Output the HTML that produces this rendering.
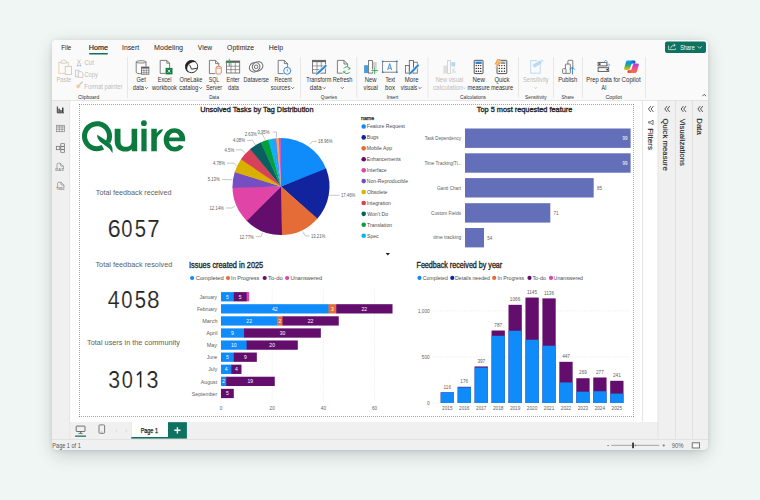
<!DOCTYPE html>
<html><head><meta charset="utf-8"><style>
html,body{margin:0;padding:0;background:#f0f6f4;}
svg{display:block;font-family:"Liberation Sans",sans-serif;}
</style></head><body>
<svg width="760" height="500" viewBox="0 0 760 500">
<defs><filter id="sh" x="-10%" y="-20%" width="120%" height="140%"><feGaussianBlur stdDeviation="9"/></filter>
<filter id="sh2" x="-10%" y="-10%" width="120%" height="120%"><feGaussianBlur stdDeviation="2"/></filter></defs>
<rect x="53" y="45" width="654" height="410" rx="6" fill="#233536" opacity="0.22" filter="url(#sh)"/>
<rect x="52" y="40.5" width="656" height="410" rx="5" fill="#233536" opacity="0.12" filter="url(#sh2)"/>

<path d="M55.5 40 H704.5 a3.5 3.5 0 0 1 3.5 3.5 V445 a5 5 0 0 1 -5 5 H57 a5 5 0 0 1 -5 -5 V43.5 a3.5 3.5 0 0 1 3.5 -3.5 Z" fill="#fafafa"/>
<rect x="52" y="100" width="18" height="340" fill="#f0f0f0"/>
<rect x="70" y="100" width="588" height="322" fill="#ffffff"/>
<rect x="658" y="100" width="50" height="340" fill="#f0f0f0"/>
<rect x="70" y="422" width="588" height="17" fill="#f0f0f0"/>
<path d="M52 439 H708 V445 a5 5 0 0 1 -5 5 H57 a5 5 0 0 1 -5 -5 Z" fill="#f0f0f0"/>
<rect x="52" y="100" width="656" height="0.8" fill="#e1dfdd"/>
<rect x="52" y="439" width="656" height="0.8" fill="#e1dfdd"/>
<rect x="69.5" y="100" width="0.7" height="339" fill="#e1dfdd"/>
<rect x="642" y="100" width="0.8" height="322" fill="#e1dfdd"/>
<rect x="657.6" y="100" width="0.8" height="339" fill="#e1dfdd"/>
<rect x="675.2" y="100" width="0.8" height="339" fill="#e1dfdd"/>
<rect x="692.2" y="100" width="0.8" height="339" fill="#e1dfdd"/>
<line x1="79" y1="104.5" x2="634" y2="104.5" stroke="#6e6c6a" stroke-width="0.6" stroke-dasharray="1 1"/><line x1="79" y1="416.5" x2="634" y2="416.5" stroke="#6e6c6a" stroke-width="0.6" stroke-dasharray="1 1"/><line x1="79.5" y1="104" x2="79.5" y2="417" stroke="#6e6c6a" stroke-width="0.6" stroke-dasharray="1 1"/><line x1="633.5" y1="104" x2="633.5" y2="417" stroke="#6e6c6a" stroke-width="0.6" stroke-dasharray="1 1"/><text x="61.20" y="49.60" font-size="6.98" textLength="10.09" lengthAdjust="spacingAndGlyphs" fill="#252423" >File</text><text x="88.83" y="49.60" font-size="6.98" textLength="19.11" lengthAdjust="spacingAndGlyphs" fill="#252423" stroke="#252423" stroke-width="0.18">Home</text><rect x="89" y="53" width="19" height="1.4" rx="0.7" fill="#0f715f"/><text x="122.09" y="49.60" font-size="6.98" textLength="16.95" lengthAdjust="spacingAndGlyphs" fill="#252423" >Insert</text><text x="154.13" y="49.60" font-size="6.98" textLength="28.96" lengthAdjust="spacingAndGlyphs" fill="#252423" >Modeling</text><text x="197.87" y="49.60" font-size="6.98" textLength="14.33" lengthAdjust="spacingAndGlyphs" fill="#252423" >View</text><text x="227.09" y="49.60" font-size="6.98" textLength="27.02" lengthAdjust="spacingAndGlyphs" fill="#252423" >Optimize</text><text x="268.84" y="49.60" font-size="6.98" textLength="14.35" lengthAdjust="spacingAndGlyphs" fill="#252423" >Help</text><rect x="665" y="41.4" width="41" height="11.5" rx="2" fill="#0f715f"/><text x="680.26" y="49.80" font-size="6.98" textLength="14.41" lengthAdjust="spacingAndGlyphs" fill="#ffffff" >Share</text><path d="M697.6 46.2 l2.1 2.1 l2.1 -2.1" stroke="#fff" stroke-width="0.7" fill="none"/><path d="M668.6 45.6 V49.6 H675.4 V48.2 M670.6 48.4 C670.9 46.4 672.4 45.2 675 45.2 M673.6 43.9 L675.3 45.2 L673.6 46.5" stroke="#fff" stroke-width="0.65" fill="none"/><text x="95.86" y="195.30" font-size="7.56" textLength="75.62" lengthAdjust="spacingAndGlyphs" fill="#605e5c" >Total feedback received</text><text x="107.84" y="237.30" font-size="23.78" textLength="12.92" lengthAdjust="spacingAndGlyphs" fill="#252423" stroke="#ffffff" stroke-width="0.15">6</text><text x="121.29" y="237.30" font-size="23.78" textLength="11.24" lengthAdjust="spacingAndGlyphs" fill="#252423" stroke="#ffffff" stroke-width="0.15">0</text><text x="134.69" y="237.30" font-size="23.78" textLength="11.24" lengthAdjust="spacingAndGlyphs" fill="#252423" stroke="#ffffff" stroke-width="0.15">5</text><text x="147.29" y="237.30" font-size="23.78" textLength="12.35" lengthAdjust="spacingAndGlyphs" fill="#252423" stroke="#ffffff" stroke-width="0.15">7</text><text x="95.45" y="267.00" font-size="7.56" textLength="76.93" lengthAdjust="spacingAndGlyphs" fill="#605e5c" >Total feedback resolved</text><text x="107.67" y="308.00" font-size="23.78" textLength="11.89" lengthAdjust="spacingAndGlyphs" fill="#252423" stroke="#ffffff" stroke-width="0.15">4</text><text x="121.29" y="308.00" font-size="23.78" textLength="11.24" lengthAdjust="spacingAndGlyphs" fill="#252423" stroke="#ffffff" stroke-width="0.15">0</text><text x="134.69" y="308.00" font-size="23.78" textLength="11.24" lengthAdjust="spacingAndGlyphs" fill="#252423" stroke="#ffffff" stroke-width="0.15">5</text><text x="146.89" y="308.00" font-size="23.78" textLength="12.54" lengthAdjust="spacingAndGlyphs" fill="#252423" stroke="#ffffff" stroke-width="0.15">8</text><text x="87.05" y="344.80" font-size="7.70" textLength="92.86" lengthAdjust="spacingAndGlyphs" fill="#605e5c" >Total users in the community</text><text x="108.35" y="387.60" font-size="23.78" textLength="11.83" lengthAdjust="spacingAndGlyphs" fill="#252423" stroke="#ffffff" stroke-width="0.15">3</text><text x="121.80" y="387.60" font-size="23.78" textLength="11.12" lengthAdjust="spacingAndGlyphs" fill="#252423" stroke="#ffffff" stroke-width="0.15">0</text><text x="146.54" y="387.60" font-size="23.78" textLength="11.94" lengthAdjust="spacingAndGlyphs" fill="#252423" stroke="#ffffff" stroke-width="0.15">3</text><path d="M140.6 371.2 V387.6 M140.9 371.6 L137 375.2" stroke="#252423" stroke-width="1.6" fill="none"/><text x="200.25" y="111.70" font-size="7.85" textLength="113.23" lengthAdjust="spacingAndGlyphs" fill="#252423" stroke="#252423" stroke-width="0.34">Unsolved Tasks by Tag Distribution</text><text x="476.75" y="111.80" font-size="7.70" textLength="95.60" lengthAdjust="spacingAndGlyphs" fill="#252423" stroke="#252423" stroke-width="0.34">Top 5 most requested feature</text><text x="189.04" y="268.00" font-size="8.58" textLength="74.17" lengthAdjust="spacingAndGlyphs" fill="#252423" stroke="#252423" stroke-width="0.34">Issues created in 2025</text><text x="416.53" y="268.00" font-size="8.58" textLength="85.69" lengthAdjust="spacingAndGlyphs" fill="#252423" stroke="#252423" stroke-width="0.34">Feedback received by year</text><g fill="#0a7a3e">
<path d="M104.07 149.49 A15.05 15.05 0 1 1 110.29 143.27 L105.83 140.89 A10 10 0 1 0 101.69 145.03 Z"/>
<path d="M97.1 134.8 C101 137.5 107 140.5 110 143.5 C112.5 146 113 150 112.4 153.3 C111 150 108.5 147.5 104.5 145 C100 142 97.2 139.5 97.1 134.8 Z"/>
<path d="M114.7 128.7 H120.5 V141.5 C120.5 145 122.5 146.8 126 146.8 C129.5 146.8 131.6 145 131.6 141.5 V128.7 H137.2 V151.3 H131.8 V149.2 C130 150.8 128 151.6 125.5 151.6 C119 151.6 114.7 147.5 114.7 141 Z"/>
<rect x="141.4" y="128.7" width="5.2" height="22.6"/>
<circle cx="143.9" cy="123.2" r="2.9"/>
<path d="M151.3 128.7 H156.8 V133.2 C158.3 130.6 160.2 129.3 163 129.0 C162.3 131.8 160.5 133.6 158.6 135.2 C157.6 136.2 157 137.5 156.8 139.2 V151.3 H151.3 Z"/>
<path d="M185 141.3 C185.2 140.5 185.2 139.5 185.2 139 C185.2 132.5 180.5 128.2 174.4 128.2 C168.2 128.2 163.7 133 163.7 139.8 C163.7 146.6 168.5 151.6 174.8 151.6 C178.5 151.6 181.8 149.8 183.7 146.5 L179.2 144.8 C178 146.2 176.5 147 174.8 147 C171.5 147 169.4 144.5 169 141.3 Z M169.2 137.6 C169.8 134.6 171.8 132.8 174.4 132.8 C177 132.8 179 134.6 179.6 137.6 Z"/>
</g><path d="M281.0 186.5 L281.00 138.00 A48.5 48.5 0 0 1 326.31 169.20 Z" fill="#0f8bfa"/><path d="M281.0 186.5 L326.06 168.56 A48.5 48.5 0 0 1 317.05 218.95 Z" fill="#12239E"/><path d="M281.0 186.5 L317.50 218.44 A48.5 48.5 0 0 1 281.36 235.00 Z" fill="#E66C37"/><path d="M281.0 186.5 L282.04 234.99 A48.5 48.5 0 0 1 246.36 220.45 Z" fill="#630e6d"/><path d="M281.0 186.5 L246.84 220.93 A48.5 48.5 0 0 1 232.50 187.09 Z" fill="#E044A7"/><path d="M281.0 186.5 L232.52 187.77 A48.5 48.5 0 0 1 234.82 171.69 Z" fill="#744EC2"/><path d="M281.0 186.5 L234.62 172.33 A48.5 48.5 0 0 1 241.27 158.68 Z" fill="#D9B000"/><path d="M281.0 186.5 L240.89 159.24 A48.5 48.5 0 0 1 250.62 148.70 Z" fill="#D9405A"/><path d="M281.0 186.5 L250.09 149.12 A48.5 48.5 0 0 1 261.20 142.22 Z" fill="#0a5f61"/><path d="M281.0 186.5 L260.59 142.51 A48.5 48.5 0 0 1 268.76 139.57 Z" fill="#089e3e"/><path d="M281.0 186.5 L268.11 139.75 A48.5 48.5 0 0 1 273.20 138.63 Z" fill="#08b6ef"/><path d="M281.0 186.5 L272.54 138.74 A48.5 48.5 0 0 1 276.71 138.19 Z" fill="#4092FF"/><path d="M281.0 186.5 L276.04 138.25 A48.5 48.5 0 0 1 279.45 138.02 Z" fill="#FFA058"/><path d="M281.0 186.5 L278.77 138.05 A48.5 48.5 0 0 1 281.00 138.00 Z" fill="#BE5DC9"/><text x="318.08" y="143.10" font-size="5.60" textLength="14.43" lengthAdjust="spacingAndGlyphs" fill="#605e5c" >18.96%</text><polyline points="309.5,144.5 312.5,141.3 317,141.3" fill="none" stroke="#a19f9d" stroke-width="0.6"/><text x="340.88" y="197.10" font-size="5.60" textLength="14.43" lengthAdjust="spacingAndGlyphs" fill="#605e5c" >17.46%</text><polyline points="329.5,195.3 339.5,195.3" fill="none" stroke="#a19f9d" stroke-width="0.6"/><text x="310.88" y="237.70" font-size="5.60" textLength="14.43" lengthAdjust="spacingAndGlyphs" fill="#605e5c" >13.21%</text><polyline points="302.5,231.5 305.5,235.9 309.5,235.9" fill="none" stroke="#a19f9d" stroke-width="0.6"/><text x="239.38" y="238.50" font-size="5.60" textLength="14.43" lengthAdjust="spacingAndGlyphs" fill="#605e5c" >12.77%</text><polyline points="255.5,236.7 261,236.7 262.5,233" fill="none" stroke="#a19f9d" stroke-width="0.6"/><text x="209.38" y="209.80" font-size="5.60" textLength="14.43" lengthAdjust="spacingAndGlyphs" fill="#605e5c" >12.14%</text><polyline points="226,208 232,208 235,206" fill="none" stroke="#a19f9d" stroke-width="0.6"/><text x="207.63" y="181.10" font-size="5.60" textLength="12.07" lengthAdjust="spacingAndGlyphs" fill="#605e5c" >5.13%</text><polyline points="222,179.3 232.5,179.8" fill="none" stroke="#a19f9d" stroke-width="0.6"/><text x="212.91" y="165.00" font-size="5.60" textLength="12.07" lengthAdjust="spacingAndGlyphs" fill="#605e5c" >4.78%</text><polyline points="227,163.2 234,163.2 236.5,166" fill="none" stroke="#a19f9d" stroke-width="0.6"/><text x="224.51" y="151.60" font-size="5.60" textLength="9.70" lengthAdjust="spacingAndGlyphs" fill="#605e5c" >4.5%</text><polyline points="236,149.8 242,149.8 244.5,153" fill="none" stroke="#a19f9d" stroke-width="0.6"/><text x="232.91" y="142.20" font-size="5.60" textLength="12.07" lengthAdjust="spacingAndGlyphs" fill="#605e5c" >4.08%</text><polyline points="247,140.4 252.5,140.4 255.5,145" fill="none" stroke="#a19f9d" stroke-width="0.6"/><text x="244.79" y="136.20" font-size="5.60" textLength="12.07" lengthAdjust="spacingAndGlyphs" fill="#605e5c" >2.63%</text><polyline points="259.4,133.8 262,134 265.4,139.8" fill="none" stroke="#a19f9d" stroke-width="0.6"/><text x="257.43" y="133.80" font-size="5.60" textLength="12.07" lengthAdjust="spacingAndGlyphs" fill="#605e5c" >0.95%</text><polyline points="272.6,132 276.5,132 276.5,137.4" fill="none" stroke="#a19f9d" stroke-width="0.6"/><text x="360.96" y="120.30" font-size="6.00" textLength="13.19" lengthAdjust="spacingAndGlyphs" fill="#252423" stroke="#252423" stroke-width="0.25">name</text><circle cx="363.7" cy="126.50" r="2.3" fill="#0f8bfa"/><text x="366.79" y="128.40" font-size="5.50" textLength="38.10" lengthAdjust="spacingAndGlyphs" fill="#4f4d4b" >Feature Request</text><circle cx="363.7" cy="137.42" r="2.3" fill="#12239E"/><text x="366.79" y="139.32" font-size="5.50" textLength="11.66" lengthAdjust="spacingAndGlyphs" fill="#4f4d4b" >Bugs</text><circle cx="363.7" cy="148.34" r="2.3" fill="#E66C37"/><text x="366.79" y="150.24" font-size="5.50" textLength="25.31" lengthAdjust="spacingAndGlyphs" fill="#4f4d4b" >Mobile App</text><circle cx="363.7" cy="159.26" r="2.3" fill="#630e6d"/><text x="366.79" y="161.16" font-size="5.50" textLength="34.12" lengthAdjust="spacingAndGlyphs" fill="#4f4d4b" >Enhancements</text><circle cx="363.7" cy="170.18" r="2.3" fill="#E044A7"/><text x="366.74" y="172.08" font-size="5.50" textLength="19.90" lengthAdjust="spacingAndGlyphs" fill="#4f4d4b" >Interface</text><circle cx="363.7" cy="181.10" r="2.3" fill="#744EC2"/><text x="366.79" y="183.00" font-size="5.50" textLength="41.23" lengthAdjust="spacingAndGlyphs" fill="#4f4d4b" >Non-Reproducible</text><circle cx="363.7" cy="192.02" r="2.3" fill="#D9B300"/><text x="366.97" y="193.92" font-size="5.50" textLength="20.47" lengthAdjust="spacingAndGlyphs" fill="#4f4d4b" >Obsolete</text><circle cx="363.7" cy="202.94" r="2.3" fill="#D9405A"/><text x="366.74" y="204.84" font-size="5.50" textLength="24.17" lengthAdjust="spacingAndGlyphs" fill="#4f4d4b" >Integration</text><circle cx="363.7" cy="213.86" r="2.3" fill="#0a5f61"/><text x="367.17" y="215.76" font-size="5.50" textLength="20.94" lengthAdjust="spacingAndGlyphs" fill="#4f4d4b" >Won’t Do</text><circle cx="363.7" cy="224.78" r="2.3" fill="#089e3e"/><text x="367.10" y="226.68" font-size="5.50" textLength="25.11" lengthAdjust="spacingAndGlyphs" fill="#4f4d4b" >Translation</text><circle cx="363.7" cy="235.70" r="2.3" fill="#08b6ef"/><text x="366.97" y="237.60" font-size="5.50" textLength="11.66" lengthAdjust="spacingAndGlyphs" fill="#4f4d4b" >Spec</text><path d="M385.6 253 h4.4 l-2.2 2.4 z" fill="#252423"/><rect x="465" y="128.50" width="165.60" height="19.4" fill="#6370b9"/><text x="424.71" y="139.95" font-size="5.00" textLength="36.29" lengthAdjust="spacingAndGlyphs" fill="#605e5c" >Task Dependency</text><text x="622.41" y="140.05" font-size="5.00" textLength="5.01" lengthAdjust="spacingAndGlyphs" fill="#ffffff" >99</text><rect x="465" y="153.30" width="165.60" height="19.4" fill="#6370b9"/><text x="424.41" y="164.75" font-size="5.00" textLength="37.02" lengthAdjust="spacingAndGlyphs" fill="#605e5c" >Time Tracking/Ti...</text><text x="622.41" y="164.85" font-size="5.00" textLength="5.01" lengthAdjust="spacingAndGlyphs" fill="#ffffff" >99</text><rect x="465" y="178.10" width="128.70" height="19.4" fill="#6370b9"/><text x="436.97" y="189.55" font-size="5.00" textLength="24.07" lengthAdjust="spacingAndGlyphs" fill="#605e5c" >Gantt Chart</text><text x="597.00" y="189.65" font-size="5.00" textLength="5.01" lengthAdjust="spacingAndGlyphs" fill="#605e5c" >85</text><rect x="465" y="203.20" width="85.30" height="19.4" fill="#6370b9"/><text x="431.06" y="214.65" font-size="5.00" textLength="30.10" lengthAdjust="spacingAndGlyphs" fill="#605e5c" >Custom Fields</text><text x="553.57" y="214.75" font-size="5.00" textLength="5.01" lengthAdjust="spacingAndGlyphs" fill="#605e5c" >71</text><rect x="465" y="228.00" width="19.00" height="19.4" fill="#6370b9"/><text x="433.33" y="239.45" font-size="5.00" textLength="28.01" lengthAdjust="spacingAndGlyphs" fill="#605e5c" >time tracking</text><text x="487.32" y="239.55" font-size="5.00" textLength="5.01" lengthAdjust="spacingAndGlyphs" fill="#605e5c" >54</text><circle cx="192.1" cy="278.0" r="2.1" fill="#0f8bfa"/><text x="195.71" y="280.10" font-size="6.00" textLength="28.07" lengthAdjust="spacingAndGlyphs" fill="#4f4d4b" >Completed</text><circle cx="228.0" cy="278.0" r="2.1" fill="#E66C37"/><text x="231.10" y="280.10" font-size="6.00" textLength="28.28" lengthAdjust="spacingAndGlyphs" fill="#4f4d4b" >In Progress</text><circle cx="264.7" cy="278.0" r="2.1" fill="#630e6d"/><text x="268.08" y="280.10" font-size="6.00" textLength="14.76" lengthAdjust="spacingAndGlyphs" fill="#4f4d4b" >To-do</text><circle cx="287.1" cy="278.0" r="2.1" fill="#E044A7"/><text x="290.38" y="280.10" font-size="6.00" textLength="31.79" lengthAdjust="spacingAndGlyphs" fill="#4f4d4b" >Unanswered</text><line x1="221.0" y1="289" x2="221.0" y2="402" stroke="#d6d4d2" stroke-width="0.6" stroke-dasharray="0.8 1.6"/><text x="219.69" y="410.10" font-size="5.20" textLength="2.60" lengthAdjust="spacingAndGlyphs" fill="#605e5c" >0</text><line x1="272.2" y1="289" x2="272.2" y2="402" stroke="#d6d4d2" stroke-width="0.6" stroke-dasharray="0.8 1.6"/><text x="269.57" y="410.10" font-size="5.20" textLength="5.21" lengthAdjust="spacingAndGlyphs" fill="#605e5c" >20</text><line x1="323.4" y1="289" x2="323.4" y2="402" stroke="#d6d4d2" stroke-width="0.6" stroke-dasharray="0.8 1.6"/><text x="320.84" y="410.10" font-size="5.20" textLength="5.21" lengthAdjust="spacingAndGlyphs" fill="#605e5c" >40</text><line x1="374.6" y1="289" x2="374.6" y2="402" stroke="#d6d4d2" stroke-width="0.6" stroke-dasharray="0.8 1.6"/><text x="371.97" y="410.10" font-size="5.20" textLength="5.21" lengthAdjust="spacingAndGlyphs" fill="#605e5c" >60</text><text x="199.43" y="298.95" font-size="6.00" textLength="17.66" lengthAdjust="spacingAndGlyphs" fill="#605e5c" >January</text><rect x="221.00" y="292.10" width="13.20" height="9.3" fill="#0f8bfa"/><text x="226.00" y="298.75" font-size="5.60" textLength="2.80" lengthAdjust="spacingAndGlyphs" fill="#ffffff" >5</text><rect x="233.80" y="292.10" width="13.20" height="9.3" fill="#630e6d"/><text x="238.80" y="298.75" font-size="5.60" textLength="2.80" lengthAdjust="spacingAndGlyphs" fill="#ffffff" >5</text><rect x="246.60" y="292.10" width="2.56" height="9.3" fill="#E044A7"/><text x="196.90" y="311.04" font-size="6.00" textLength="20.21" lengthAdjust="spacingAndGlyphs" fill="#605e5c" >February</text><rect x="221.00" y="304.19" width="107.92" height="9.3" fill="#0f8bfa"/><text x="272.04" y="310.84" font-size="5.60" textLength="5.61" lengthAdjust="spacingAndGlyphs" fill="#ffffff" >42</text><rect x="328.52" y="304.19" width="8.08" height="9.3" fill="#E66C37"/><text x="330.96" y="310.84" font-size="5.60" textLength="2.80" lengthAdjust="spacingAndGlyphs" fill="#ffffff" >3</text><rect x="336.20" y="304.19" width="56.32" height="9.3" fill="#630e6d"/><text x="361.56" y="310.84" font-size="5.60" textLength="5.61" lengthAdjust="spacingAndGlyphs" fill="#ffffff" >22</text><text x="202.26" y="323.13" font-size="6.00" textLength="15.21" lengthAdjust="spacingAndGlyphs" fill="#605e5c" >March</text><rect x="221.00" y="316.28" width="56.72" height="9.3" fill="#0f8bfa"/><text x="246.36" y="322.93" font-size="5.60" textLength="5.61" lengthAdjust="spacingAndGlyphs" fill="#ffffff" >22</text><rect x="277.32" y="316.28" width="5.52" height="9.3" fill="#E66C37"/><text x="278.48" y="322.93" font-size="5.60" textLength="2.80" lengthAdjust="spacingAndGlyphs" fill="#ffffff" >2</text><rect x="282.44" y="316.28" width="56.32" height="9.3" fill="#630e6d"/><text x="307.80" y="322.93" font-size="5.60" textLength="5.61" lengthAdjust="spacingAndGlyphs" fill="#ffffff" >22</text><text x="206.30" y="335.22" font-size="6.00" textLength="11.17" lengthAdjust="spacingAndGlyphs" fill="#605e5c" >April</text><rect x="221.00" y="328.37" width="23.44" height="9.3" fill="#0f8bfa"/><text x="231.12" y="335.02" font-size="5.60" textLength="2.80" lengthAdjust="spacingAndGlyphs" fill="#ffffff" >9</text><rect x="244.04" y="328.37" width="76.80" height="9.3" fill="#630e6d"/><text x="279.63" y="335.02" font-size="5.60" textLength="5.61" lengthAdjust="spacingAndGlyphs" fill="#ffffff" >30</text><text x="206.66" y="347.31" font-size="6.00" textLength="10.44" lengthAdjust="spacingAndGlyphs" fill="#605e5c" >May</text><rect x="221.00" y="340.46" width="26.00" height="9.3" fill="#0f8bfa"/><text x="230.90" y="347.11" font-size="5.60" textLength="5.61" lengthAdjust="spacingAndGlyphs" fill="#ffffff" >10</text><rect x="246.60" y="340.46" width="51.20" height="9.3" fill="#630e6d"/><text x="269.36" y="347.11" font-size="5.60" textLength="5.61" lengthAdjust="spacingAndGlyphs" fill="#ffffff" >20</text><text x="206.73" y="359.40" font-size="6.00" textLength="10.61" lengthAdjust="spacingAndGlyphs" fill="#605e5c" >June</text><rect x="221.00" y="352.55" width="13.20" height="9.3" fill="#0f8bfa"/><text x="226.00" y="359.20" font-size="5.60" textLength="2.80" lengthAdjust="spacingAndGlyphs" fill="#ffffff" >5</text><rect x="233.80" y="352.55" width="23.04" height="9.3" fill="#630e6d"/><text x="243.92" y="359.20" font-size="5.60" textLength="2.80" lengthAdjust="spacingAndGlyphs" fill="#ffffff" >9</text><text x="208.33" y="371.49" font-size="6.00" textLength="8.77" lengthAdjust="spacingAndGlyphs" fill="#605e5c" >July</text><rect x="221.00" y="364.64" width="10.64" height="9.3" fill="#0f8bfa"/><text x="224.75" y="371.29" font-size="5.60" textLength="2.80" lengthAdjust="spacingAndGlyphs" fill="#ffffff" >4</text><rect x="231.24" y="364.64" width="10.24" height="9.3" fill="#630e6d"/><text x="234.99" y="371.29" font-size="5.60" textLength="2.80" lengthAdjust="spacingAndGlyphs" fill="#ffffff" >4</text><text x="200.80" y="383.58" font-size="6.00" textLength="16.34" lengthAdjust="spacingAndGlyphs" fill="#605e5c" >August</text><rect x="221.00" y="376.73" width="5.52" height="9.3" fill="#0f8bfa"/><text x="222.16" y="383.38" font-size="5.60" textLength="2.80" lengthAdjust="spacingAndGlyphs" fill="#ffffff" >2</text><rect x="226.12" y="376.73" width="48.64" height="9.3" fill="#630e6d"/><text x="247.57" y="383.38" font-size="5.60" textLength="5.61" lengthAdjust="spacingAndGlyphs" fill="#ffffff" >19</text><text x="191.87" y="395.67" font-size="6.00" textLength="25.32" lengthAdjust="spacingAndGlyphs" fill="#605e5c" >September</text><rect x="221.00" y="388.82" width="12.80" height="9.3" fill="#630e6d"/><text x="226.00" y="395.47" font-size="5.60" textLength="2.80" lengthAdjust="spacingAndGlyphs" fill="#ffffff" >5</text><circle cx="419.5" cy="277.9" r="2.1" fill="#0f8bfa"/><text x="422.74" y="280.10" font-size="6.00" textLength="25.10" lengthAdjust="spacingAndGlyphs" fill="#4f4d4b" >Completed</text><circle cx="452.3" cy="277.9" r="2.1" fill="#12239E"/><text x="455.08" y="280.10" font-size="6.00" textLength="34.76" lengthAdjust="spacingAndGlyphs" fill="#4f4d4b" >Details needed</text><circle cx="494.2" cy="277.9" r="2.1" fill="#E66C37"/><text x="497.53" y="280.10" font-size="6.00" textLength="26.64" lengthAdjust="spacingAndGlyphs" fill="#4f4d4b" >In Progress</text><circle cx="529.5" cy="277.9" r="2.1" fill="#630e6d"/><text x="532.39" y="280.10" font-size="6.00" textLength="13.64" lengthAdjust="spacingAndGlyphs" fill="#4f4d4b" >To-do</text><circle cx="551.0" cy="277.9" r="2.1" fill="#E044A7"/><text x="553.61" y="280.10" font-size="6.00" textLength="29.43" lengthAdjust="spacingAndGlyphs" fill="#4f4d4b" >Unanswered</text><line x1="433" y1="310.90" x2="630" y2="310.90" stroke="#d6d4d2" stroke-width="0.6" stroke-dasharray="0.8 1.6"/><text x="417.96" y="312.80" font-size="5.20" textLength="11.71" lengthAdjust="spacingAndGlyphs" fill="#605e5c" >1,000</text><line x1="433" y1="356.95" x2="630" y2="356.95" stroke="#d6d4d2" stroke-width="0.6" stroke-dasharray="0.8 1.6"/><text x="421.87" y="358.85" font-size="5.20" textLength="7.81" lengthAdjust="spacingAndGlyphs" fill="#605e5c" >500</text><line x1="433" y1="403.00" x2="440" y2="403.00" stroke="#d6d4d2" stroke-width="0.6" stroke-dasharray="0.8 1.6"/><text x="427.07" y="404.90" font-size="5.20" textLength="2.60" lengthAdjust="spacingAndGlyphs" fill="#605e5c" >0</text><rect x="440.70" y="392.32" width="13.3" height="10.68" fill="#630e6d"/><rect x="440.70" y="392.32" width="13.3" height="10.68" fill="#0f8bfa"/><text x="443.54" y="388.52" font-size="5.20" textLength="7.46" lengthAdjust="spacingAndGlyphs" fill="#605e5c" >116</text><text x="442.12" y="410.20" font-size="5.20" textLength="10.41" lengthAdjust="spacingAndGlyphs" fill="#605e5c" >2015</text><rect x="457.65" y="386.79" width="13.3" height="16.21" fill="#630e6d"/><rect x="457.65" y="387.34" width="13.3" height="15.66" fill="#0f8bfa"/><text x="460.32" y="382.99" font-size="5.20" textLength="7.81" lengthAdjust="spacingAndGlyphs" fill="#605e5c" >176</text><text x="459.07" y="410.20" font-size="5.20" textLength="10.41" lengthAdjust="spacingAndGlyphs" fill="#605e5c" >2016</text><rect x="474.60" y="366.44" width="13.3" height="36.56" fill="#630e6d"/><rect x="474.60" y="367.54" width="13.3" height="35.46" fill="#0f8bfa"/><text x="477.38" y="362.64" font-size="5.20" textLength="7.81" lengthAdjust="spacingAndGlyphs" fill="#605e5c" >397</text><text x="476.04" y="410.20" font-size="5.20" textLength="10.41" lengthAdjust="spacingAndGlyphs" fill="#605e5c" >2017</text><rect x="491.55" y="330.52" width="13.3" height="72.48" fill="#630e6d"/><rect x="491.55" y="335.77" width="13.3" height="67.23" fill="#0f8bfa"/><text x="494.30" y="326.72" font-size="5.20" textLength="7.81" lengthAdjust="spacingAndGlyphs" fill="#605e5c" >787</text><text x="492.97" y="410.20" font-size="5.20" textLength="10.41" lengthAdjust="spacingAndGlyphs" fill="#605e5c" >2018</text><rect x="508.50" y="304.82" width="13.3" height="98.18" fill="#630e6d"/><rect x="508.50" y="330.79" width="13.3" height="72.21" fill="#0f8bfa"/><text x="509.86" y="301.02" font-size="5.20" textLength="10.41" lengthAdjust="spacingAndGlyphs" fill="#605e5c" >1066</text><text x="509.93" y="410.20" font-size="5.20" textLength="10.41" lengthAdjust="spacingAndGlyphs" fill="#605e5c" >2019</text><rect x="525.45" y="297.55" width="13.3" height="105.45" fill="#630e6d"/><rect x="525.45" y="339.73" width="13.3" height="63.27" fill="#0f8bfa"/><text x="526.99" y="293.75" font-size="5.20" textLength="10.06" lengthAdjust="spacingAndGlyphs" fill="#605e5c" >1145</text><text x="526.86" y="410.20" font-size="5.20" textLength="10.41" lengthAdjust="spacingAndGlyphs" fill="#605e5c" >2020</text><rect x="542.40" y="298.37" width="13.3" height="104.63" fill="#630e6d"/><rect x="542.40" y="345.71" width="13.3" height="57.29" fill="#0f8bfa"/><text x="543.94" y="294.57" font-size="5.20" textLength="10.06" lengthAdjust="spacingAndGlyphs" fill="#605e5c" >1136</text><text x="543.83" y="410.20" font-size="5.20" textLength="10.41" lengthAdjust="spacingAndGlyphs" fill="#605e5c" >2021</text><rect x="559.35" y="361.83" width="13.3" height="41.17" fill="#630e6d"/><rect x="559.35" y="382.46" width="13.3" height="20.54" fill="#0f8bfa"/><text x="562.17" y="358.03" font-size="5.20" textLength="7.81" lengthAdjust="spacingAndGlyphs" fill="#605e5c" >447</text><text x="560.79" y="410.20" font-size="5.20" textLength="10.41" lengthAdjust="spacingAndGlyphs" fill="#605e5c" >2022</text><rect x="576.30" y="378.23" width="13.3" height="24.77" fill="#630e6d"/><rect x="576.30" y="391.67" width="13.3" height="11.33" fill="#0f8bfa"/><text x="579.04" y="374.43" font-size="5.20" textLength="7.81" lengthAdjust="spacingAndGlyphs" fill="#605e5c" >269</text><text x="577.72" y="410.20" font-size="5.20" textLength="10.41" lengthAdjust="spacingAndGlyphs" fill="#605e5c" >2023</text><rect x="593.25" y="377.49" width="13.3" height="25.51" fill="#630e6d"/><rect x="593.25" y="391.21" width="13.3" height="11.79" fill="#0f8bfa"/><text x="596.00" y="373.69" font-size="5.20" textLength="7.81" lengthAdjust="spacingAndGlyphs" fill="#605e5c" >277</text><text x="594.65" y="410.20" font-size="5.20" textLength="10.41" lengthAdjust="spacingAndGlyphs" fill="#605e5c" >2024</text><rect x="610.20" y="380.80" width="13.3" height="22.20" fill="#630e6d"/><rect x="610.20" y="393.61" width="13.3" height="9.39" fill="#0f8bfa"/><text x="612.94" y="377.00" font-size="5.20" textLength="7.81" lengthAdjust="spacingAndGlyphs" fill="#605e5c" >241</text><text x="611.62" y="410.20" font-size="5.20" textLength="10.41" lengthAdjust="spacingAndGlyphs" fill="#605e5c" >2025</text><text x="56.54" y="81.90" font-size="6.70" textLength="14.73" lengthAdjust="spacingAndGlyphs" fill="#bdbbb9" >Paste</text><text x="84.50" y="65.30" font-size="6.70" textLength="9.44" lengthAdjust="spacingAndGlyphs" fill="#bdbbb9" >Cut</text><text x="84.52" y="77.00" font-size="6.70" textLength="13.28" lengthAdjust="spacingAndGlyphs" fill="#bdbbb9" >Copy</text><text x="84.33" y="88.60" font-size="6.70" textLength="38.07" lengthAdjust="spacingAndGlyphs" fill="#bdbbb9" >Format painter</text><text x="77.95" y="98.70" font-size="5.30" textLength="21.27" lengthAdjust="spacingAndGlyphs" fill="#323130" >Clipboard</text><text x="136.61" y="81.90" font-size="6.70" textLength="9.23" lengthAdjust="spacingAndGlyphs" fill="#323130" >Get</text><text x="132.77" y="89.80" font-size="6.70" textLength="11.14" lengthAdjust="spacingAndGlyphs" fill="#323130" >data</text><path d="M145.2 87.3 L146.5 88.6 L147.8 87.3" stroke="#323130" stroke-width="0.75" fill="none"/><text x="157.85" y="81.90" font-size="6.70" textLength="13.61" lengthAdjust="spacingAndGlyphs" fill="#323130" >Excel</text><text x="152.00" y="89.80" font-size="6.70" textLength="25.00" lengthAdjust="spacingAndGlyphs" fill="#323130" >workbook</text><text x="179.55" y="81.90" font-size="6.70" textLength="22.90" lengthAdjust="spacingAndGlyphs" fill="#323130" >OneLake</text><text x="179.36" y="89.80" font-size="6.70" textLength="19.02" lengthAdjust="spacingAndGlyphs" fill="#323130" >catalog</text><path d="M199.29999999999998 87.3 L200.6 88.6 L201.9 87.3" stroke="#323130" stroke-width="0.75" fill="none"/><text x="208.77" y="81.90" font-size="6.70" textLength="10.39" lengthAdjust="spacingAndGlyphs" fill="#323130" >SQL</text><text x="206.05" y="89.80" font-size="6.70" textLength="16.06" lengthAdjust="spacingAndGlyphs" fill="#323130" >Server</text><text x="226.56" y="81.90" font-size="6.70" textLength="13.05" lengthAdjust="spacingAndGlyphs" fill="#323130" >Enter</text><text x="228.08" y="89.80" font-size="6.70" textLength="10.73" lengthAdjust="spacingAndGlyphs" fill="#323130" >data</text><text x="243.55" y="81.90" font-size="6.70" textLength="25.41" lengthAdjust="spacingAndGlyphs" fill="#323130" >Dataverse</text><text x="274.56" y="81.90" font-size="6.70" textLength="17.28" lengthAdjust="spacingAndGlyphs" fill="#323130" >Recent</text><text x="270.83" y="89.80" font-size="6.70" textLength="19.37" lengthAdjust="spacingAndGlyphs" fill="#323130" >sources</text><path d="M291.3 87.3 L292.6 88.6 L293.90000000000003 87.3" stroke="#323130" stroke-width="0.75" fill="none"/><text x="209.13" y="98.70" font-size="5.30" textLength="9.89" lengthAdjust="spacingAndGlyphs" fill="#323130" >Data</text><text x="306.19" y="81.90" font-size="6.70" textLength="25.17" lengthAdjust="spacingAndGlyphs" fill="#323130" >Transform</text><text x="309.76" y="89.80" font-size="6.70" textLength="11.85" lengthAdjust="spacingAndGlyphs" fill="#323130" >data</text><path d="M322.9 87.3 L324.2 88.6 L325.5 87.3" stroke="#323130" stroke-width="0.75" fill="none"/><text x="332.75" y="81.90" font-size="6.70" textLength="19.73" lengthAdjust="spacingAndGlyphs" fill="#323130" >Refresh</text><path d="M341.0 87.3 L342.3 88.6 L343.6 87.3" stroke="#323130" stroke-width="0.75" fill="none"/><text x="320.79" y="98.70" font-size="5.30" textLength="16.18" lengthAdjust="spacingAndGlyphs" fill="#323130" >Queries</text><text x="364.83" y="81.90" font-size="6.70" textLength="11.74" lengthAdjust="spacingAndGlyphs" fill="#323130" >New</text><text x="363.57" y="89.80" font-size="6.70" textLength="14.40" lengthAdjust="spacingAndGlyphs" fill="#323130" >visual</text><text x="385.39" y="81.90" font-size="6.70" textLength="9.65" lengthAdjust="spacingAndGlyphs" fill="#323130" >Text</text><text x="385.10" y="89.80" font-size="6.70" textLength="9.98" lengthAdjust="spacingAndGlyphs" fill="#323130" >box</text><text x="404.82" y="81.90" font-size="6.70" textLength="13.67" lengthAdjust="spacingAndGlyphs" fill="#323130" >More</text><text x="400.77" y="89.80" font-size="6.70" textLength="16.53" lengthAdjust="spacingAndGlyphs" fill="#323130" >visuals</text><path d="M418.7 87.3 L420.0 88.6 L421.3 87.3" stroke="#323130" stroke-width="0.75" fill="none"/><text x="386.68" y="98.70" font-size="5.30" textLength="11.54" lengthAdjust="spacingAndGlyphs" fill="#323130" >Insert</text><text x="435.74" y="81.90" font-size="6.70" textLength="27.53" lengthAdjust="spacingAndGlyphs" fill="#bdbbb9" >New visual</text><text x="432.95" y="89.80" font-size="6.70" textLength="29.97" lengthAdjust="spacingAndGlyphs" fill="#bdbbb9" >calculation</text><path d="M462.9 87.3 L464.2 88.6 L465.5 87.3" stroke="#bdbbb9" stroke-width="0.75" fill="none"/><text x="472.51" y="81.90" font-size="6.70" textLength="12.37" lengthAdjust="spacingAndGlyphs" fill="#323130" >New</text><text x="467.43" y="89.80" font-size="6.70" textLength="22.34" lengthAdjust="spacingAndGlyphs" fill="#323130" >measure</text><text x="494.43" y="81.90" font-size="6.70" textLength="15.07" lengthAdjust="spacingAndGlyphs" fill="#323130" >Quick</text><text x="491.03" y="89.80" font-size="6.70" textLength="22.13" lengthAdjust="spacingAndGlyphs" fill="#323130" >measure</text><text x="460.06" y="98.70" font-size="5.30" textLength="25.92" lengthAdjust="spacingAndGlyphs" fill="#323130" >Calculations</text><text x="522.94" y="81.90" font-size="6.70" textLength="25.67" lengthAdjust="spacingAndGlyphs" fill="#bdbbb9" >Sensitivity</text><path d="M534.3000000000001 87.3 L535.6 88.6 L536.9 87.3" stroke="#bdbbb9" stroke-width="0.75" fill="none"/><text x="525.08" y="98.70" font-size="5.30" textLength="21.52" lengthAdjust="spacingAndGlyphs" fill="#323130" >Sensitivity</text><text x="558.24" y="81.90" font-size="6.70" textLength="18.94" lengthAdjust="spacingAndGlyphs" fill="#323130" >Publish</text><text x="561.49" y="98.70" font-size="5.30" textLength="12.33" lengthAdjust="spacingAndGlyphs" fill="#323130" >Share</text><text x="586.33" y="81.90" font-size="6.70" textLength="33.97" lengthAdjust="spacingAndGlyphs" fill="#323130" >Prep data for</text><text x="601.60" y="89.80" font-size="6.70" textLength="4.89" lengthAdjust="spacingAndGlyphs" fill="#323130" >AI</text><text x="621.59" y="81.90" font-size="6.70" textLength="19.16" lengthAdjust="spacingAndGlyphs" fill="#323130" >Copilot</text><text x="605.43" y="98.70" font-size="5.30" textLength="16.51" lengthAdjust="spacingAndGlyphs" fill="#323130" >Copilot</text><path d="M702.3 96.2 L704.2 94.3 L706.1 96.2" stroke="#323130" stroke-width="0.8" fill="none"/><rect x="127.25" y="57" width="0.7" height="41" fill="#e1dfdd"/><rect x="300.15" y="57" width="0.7" height="41" fill="#e1dfdd"/><rect x="356.45" y="57" width="0.7" height="41" fill="#e1dfdd"/><rect x="427.65" y="57" width="0.7" height="41" fill="#e1dfdd"/><rect x="518.35" y="57" width="0.7" height="41" fill="#e1dfdd"/><rect x="553.05" y="57" width="0.7" height="41" fill="#e1dfdd"/><rect x="582.15" y="57" width="0.7" height="41" fill="#e1dfdd"/><rect x="645.25" y="57" width="0.7" height="41" fill="#e1dfdd"/>
<g fill="none" stroke-width="0.8">
 <!-- Paste (disabled) -->
 <rect x="58.9" y="62.4" width="9.4" height="11" stroke="#f5cfa8" stroke-width="1"/>
 <path d="M61 63.2 L61 61.3 L63.7 59.8 L66.4 61.3 L66.4 63.2 Z" stroke="#c8c8c8" fill="#fafafa"/>
 <rect x="65.2" y="66.3" width="6.2" height="8.2" stroke="#c4c4c4" fill="#fafafa"/>
 <!-- Cut -->
 <path d="M77.4 59.4 L80.6 64.2 M80.6 59.4 L77.4 64.2" stroke="#c4c4c4"/>
 <circle cx="77.7" cy="65.4" r="1" fill="#9cc3e6" stroke="none"/>
 <circle cx="80.3" cy="65.4" r="1" fill="#9cc3e6" stroke="none"/>
 <!-- Copy -->
 <rect x="75.4" y="70.2" width="3.4" height="6.6" stroke="#c4c4c4"/>
 <path d="M78.3 71.6 H81.3 L82.9 73.2 V77.4 H78.3 Z" stroke="#c4c4c4" fill="#fafafa"/>
 <!-- Format painter -->
 <path d="M75.8 86.6 L78.4 84 L80.6 86.2 L78 88.6 Z" fill="#f5c89a" stroke="none"/>
 <path d="M79.4 84.8 L82.6 81.6" stroke="#c4c4c4" stroke-width="1.2"/>
 <!-- Get data -->
 <path d="M136.2 61.9 C136.2 60.3 146 60.3 146 61.9 V66.6 M136.2 61.9 V72.2 C136.2 73.4 138.5 73.7 141 73.7 M136.2 61.9 C136.2 63.4 146 63.4 146 61.9" stroke="#616161"/>
 <rect x="141.4" y="67" width="7.5" height="7.2" fill="#fafafa" stroke="#616161"/>
 <rect x="141.4" y="67" width="7.5" height="1.6" fill="#616161" stroke="none"/>
 <path d="M143.9 68.6 V74.2 M146.4 68.6 V74.2 M141.4 70.5 H148.9 M141.4 72.4 H148.9" stroke="#616161" stroke-width="0.5"/>
 <!-- Excel -->
 <path d="M160.2 60.4 H166.8 L169.6 63.2 V68 M160.2 60.4 V73.4 H165.6 M166.8 60.4 V63.2 H169.6" stroke="#616161"/>
 <rect x="165.6" y="67.9" width="6.9" height="6.5" fill="#107c41" stroke="none"/>
 <path d="M167.7 69.6 L170.4 72.7 M170.4 69.6 L167.7 72.7" stroke="#fff" stroke-width="0.8"/>
 <!-- OneLake -->
 <circle cx="191.6" cy="66.6" r="6.1" stroke="#242424" stroke-width="0.9"/>
 <path d="M185.4 67 C185.4 63 188 60.4 191.5 60.3 C193.5 60.3 195 61 196 62 C194 61.8 192 62.3 190.2 63.2 C188 64.5 187 67 187.2 69.5 C187.4 71 188 72 189 72.8 C186.8 72 185.4 69.8 185.4 67 Z" fill="#242424" stroke="none"/>
 <path d="M189.6 64.8 L191.6 69.2 L197.4 68.1" stroke="#242424" stroke-width="0.9"/>
 <!-- SQL Server -->
 <path d="M209.4 60.4 H215.6 L218.8 63.6 V66 M209.4 60.4 V73.6 H215.4 M215.6 60.4 V63.6 H218.8" stroke="#616161"/>
 <path d="M216 67.4 C216 66 221.3 66 221.3 67.4 V73 C221.3 74.4 216 74.4 216 73 Z M216 67.4 C216 68.6 221.3 68.6 221.3 67.4" stroke="#e66c37" fill="#fafafa"/>
 <!-- Enter data -->
 <rect x="226.5" y="61" width="13.2" height="12" stroke="#616161"/>
 <rect x="226.5" y="61" width="13.2" height="1.8" fill="#616161" stroke="none"/>
 <path d="M231 62.8 V73 M235.3 62.8 V73 M226.5 66.2 H239.7 M226.5 69.6 H239.7" stroke="#616161" stroke-width="0.6"/>
 <path d="M229.3 58.9 V66.2 M225.6 62.5 H233" stroke="#2e9e54" stroke-width="0.9"/>
 <!-- Dataverse -->
 <ellipse cx="254.6" cy="67.2" rx="5.4" ry="4.6" transform="rotate(-25 254.6 67.2)" stroke="#707070" stroke-width="1"/>
 <ellipse cx="257.6" cy="66.4" rx="5.4" ry="4.6" transform="rotate(-25 257.6 66.4)" stroke="#707070" stroke-width="1"/>
 <circle cx="256.1" cy="66.8" r="1.8" stroke="#707070" stroke-width="1"/>
 <!-- Recent sources -->
 <path d="M278.2 60.4 H284.4 L287.6 63.6 V67 M278.2 60.4 V73.6 H283.6 M284.4 60.4 V63.6 H287.6" stroke="#616161"/>
 <circle cx="287.2" cy="70.8" r="3.5" stroke="#1f7fd0" fill="#fafafa" stroke-width="0.9"/>
 <path d="M287.2 68.9 V70.9 L288.3 71.9" stroke="#616161" stroke-width="0.6"/>
 <!-- Transform data -->
 <rect x="312.4" y="60.3" width="13.2" height="12.8" stroke="#616161"/>
 <rect x="312.4" y="60.3" width="13.2" height="1.8" fill="#616161" stroke="none"/>
 <path d="M317 62.1 V73.1 M321.3 62.1 V70 M312.4 65.9 H325.6 M312.4 69.5 H322" stroke="#616161" stroke-width="0.6"/>
 <path d="M326.3 65.3 L317.6 73.4" stroke="#fafafa" stroke-width="3.4"/>
 <path d="M326.3 65.3 L317.8 73.2" stroke="#2b88d8" stroke-width="2.1"/>
 <path d="M317.8 73.2 L316.3 74.6" stroke="#2b88d8" stroke-width="1.2"/>
 <!-- Refresh -->
 <path d="M337.4 60.4 H344 L347.6 64 V66.6 M337.4 60.4 V73.2 H342.6 M344 60.4 V64 H347.6" stroke="#616161"/>
 <path d="M343.8 68.6 A3.3 3.3 0 0 1 349.8 68.8 M349.8 71.8 A3.3 3.3 0 0 1 343.8 71.6" stroke="#2e9e54" stroke-width="0.9"/>
 <path d="M349.9 67.2 V69.2 H347.9 M343.7 73.2 V71.2 H345.7" stroke="#2e9e54" stroke-width="0.7"/>
 <!-- New visual -->
 <rect x="364.1" y="65.2" width="4" height="7.9" fill="#4a9ae0" stroke="none"/>
 <rect x="368.5" y="60.6" width="4" height="12.5" fill="#fafafa" stroke="#616161"/>
 <rect x="372.9" y="62" width="3.8" height="11.1" fill="#d0d0d0" stroke="none"/>
 <path d="M374.7 67.3 V74.2 M371.4 70.6 H378.2" stroke="#fafafa" stroke-width="2.2"/>
 <path d="M374.7 67.3 V74.2 M371.4 70.6 H378.2" stroke="#2e9e54" stroke-width="0.9"/>
 <!-- Text box -->
 <rect x="382.6" y="61.4" width="14.2" height="10.8" stroke="#7a7a7a" stroke-width="0.9"/>
 <rect x="381.9" y="60.6" width="1.5" height="1.5" fill="#1f7fd0" stroke="none"/>
 <rect x="396.1" y="60.6" width="1.5" height="1.5" fill="#1f7fd0" stroke="none"/>
 <rect x="381.9" y="71.5" width="1.5" height="1.5" fill="#1f7fd0" stroke="none"/>
 <rect x="396.1" y="71.5" width="1.5" height="1.5" fill="#1f7fd0" stroke="none"/>
 <path d="M387.7 70 L389.7 63.6 L391.7 70 M388.4 68.1 H391" stroke="#1f7fd0" stroke-width="0.8"/>
 <!-- More visuals -->
 <rect x="405.5" y="65.5" width="3.8" height="7.6" stroke="#616161"/>
 <rect x="409.3" y="60.5" width="4.2" height="12.6" stroke="#616161"/>
 <rect x="413.5" y="62.2" width="3.8" height="10.9" stroke="#616161"/>
 <path d="M418.6 64.7 L410.4 73.2" stroke="#fafafa" stroke-width="3.4"/>
 <path d="M418.6 64.7 L410.4 73.2" stroke="#2b88d8" stroke-width="2"/>
 <path d="M410.4 73.2 L409.2 74.4" stroke="#2b88d8" stroke-width="1.2"/>
 <!-- New visual calculation (disabled) -->
 <rect x="443.3" y="65.5" width="4.3" height="8" fill="#dedede" stroke="none"/>
 <rect x="447.6" y="60.5" width="3" height="13" stroke="#cfcfcf"/>
 <rect x="451.4" y="62.2" width="3.8" height="4.2" fill="#b4d6f2" stroke="none"/>
 <path d="M451.6 73 C452.6 73 453 72.2 453.2 70.5 C453.4 68.8 453.8 68 455 68 M452.2 70.2 H454.4 M453.8 71.2 L455.8 73.2 M455.8 71.2 L453.8 73.2" stroke="#c8c8c8" stroke-width="0.6"/>
 <!-- New measure -->
 <rect x="474.2" y="60.3" width="8.8" height="13.3" rx="0.6" stroke="#444" stroke-width="0.9"/>
 <rect x="475.5" y="61.6" width="6.2" height="2.4" fill="#2b88d8" stroke="none"/>
 <!-- Quick measure -->
 <rect x="497" y="60.3" width="9.8" height="13.3" rx="0.6" stroke="#444" stroke-width="0.9"/>
 <rect x="498.5" y="61.6" width="6.8" height="2.4" fill="#9a9a9a" stroke="none"/>
 <path d="M497.4 59 H501 L498.9 62.8 H501.2 L494.9 69 L496.7 64.6 H494.3 Z" fill="#ec7f2c" stroke="#fafafa" stroke-width="0.5"/><path d="M497.9 59.8 H499.8 L497.9 63.4 H499.6 L496.6 66.6 L497.6 64.1 H495.6 Z" fill="#f7c46a"/>
 <!-- Sensitivity (disabled) -->
 <path d="M530.7 60.6 H537 L540.2 63.8 V73.2 H530.7 Z" stroke="#b4d6f2" stroke-width="0.9"/>
 <path d="M533 66.2 L542.4 60.4" stroke="#fafafa" stroke-width="4.4"/>
 <path d="M533.4 66.4 L540.8 61.8" stroke="#b4d6f2" stroke-width="3.2"/>
 <path d="M534.6 65.6 L539.6 62.6" stroke="#fafafa" stroke-width="0.5" stroke-dasharray="0.6 0.6"/>
 <circle cx="541.8" cy="60.8" r="1" stroke="#b4d6f2" stroke-width="0.7"/>
 <!-- Publish -->
 <rect x="567.9" y="60.3" width="4.9" height="8.2" rx="0.7" stroke="#616161" fill="#fafafa"/>
 <rect x="565.4" y="64.1" width="4.9" height="9.3" rx="0.5" stroke="#616161" fill="#fafafa"/>
 <rect x="562.6" y="68.7" width="3.4" height="4.7" rx="0.7" stroke="#616161" fill="#fafafa"/>
 <path d="M572.4 74.6 V67.4" stroke="#fafafa" stroke-width="2.6"/>
 <path d="M572.4 74.6 V67.2 M569.9 69.6 L572.4 67.1 L574.9 69.6" stroke="#1f7fd0" stroke-width="0.9"/>
 <!-- Prep data for AI -->
 <rect x="598.1" y="62.4" width="8.8" height="3.5" stroke="#505050" stroke-width="0.9"/>
 <rect x="598.1" y="67.7" width="10.6" height="3.7" stroke="#505050" stroke-width="0.9"/>
 <rect x="598.9" y="63.3" width="1.6" height="1.6" fill="#303030" stroke="none"/>
 <rect x="606.4" y="68.8" width="1.6" height="1.6" fill="#303030" stroke="none"/>
 <path d="M605.8 60.2 L607 61.5 L605.8 62.8 L604.6 61.5 Z M608.5 63.8 L609.7 65.1 L608.5 66.4 L607.3 65.1 Z" stroke="#2b88d8" stroke-width="0.7" fill="#fafafa"/>
</g>
<!-- Copilot -->
<defs>
 <linearGradient id="cpL" gradientUnits="userSpaceOnUse" x1="0" y1="60" x2="0" y2="70"><stop offset="0" stop-color="#1aa0ea"/><stop offset="0.35" stop-color="#0f9cc8"/><stop offset="0.62" stop-color="#4cb44a"/><stop offset="1" stop-color="#f2c014"/></linearGradient>
 <linearGradient id="cpT" gradientUnits="userSpaceOnUse" x1="630" y1="0" x2="635.5" y2="0"><stop offset="0" stop-color="#1544d8" stop-opacity="0"/><stop offset="1" stop-color="#1240c8" stop-opacity="0.95"/></linearGradient>
 <linearGradient id="cpR" gradientUnits="userSpaceOnUse" x1="0" y1="63.6" x2="0" y2="73"><stop offset="0" stop-color="#a83ee6"/><stop offset="0.45" stop-color="#ea4b9a"/><stop offset="1" stop-color="#ff7438"/></linearGradient>
 <linearGradient id="cpB" gradientUnits="userSpaceOnUse" x1="627.5" y1="0" x2="633" y2="0"><stop offset="0" stop-color="#e52e2a" stop-opacity="0.9"/><stop offset="1" stop-color="#ff6a3a" stop-opacity="0"/></linearGradient>
</defs>
<path d="M627.6 60.6 H634 C635 60.6 635.5 61.5 635.3 62.6 L635 63.6 H632.5 C631.8 63.6 631.4 64 631.2 64.8 L629.8 69 C629.5 69.7 628.9 70 628.2 70 H625.5 C624.5 70 623.9 69.2 624.2 68.2 L625.8 62.4 C626.1 61.3 626.5 60.6 627.6 60.6 Z" fill="url(#cpL)"/>
<path d="M627.6 60.6 H634 C635 60.6 635.5 61.5 635.3 62.6 L635 63.6 H632.5 C631.8 63.6 631.4 64 631.2 64.8 L630.5 67 L626.8 60.9 C627 60.7 627.3 60.6 627.6 60.6 Z" fill="url(#cpT)"/>
<path d="M634.7 73 H628.6 C627.7 73 627.4 72.2 627.7 71.3 L628 70.3 H630.2 C630.9 70.3 631.4 69.9 631.6 69.1 L633 64.5 C633.3 63.8 633.8 63.6 634.5 63.6 H637.5 C638.5 63.6 639 64.4 638.7 65.4 L636.9 71.4 C636.6 72.4 635.8 73 634.7 73 Z" fill="url(#cpR)"/>
<path d="M634.7 73 H628.6 C627.7 73 627.4 72.2 627.7 71.3 L628 70.3 H630.2 C630.9 70.3 631.4 69.9 631.6 69.1 L632 67.8 L634.5 73 Z" fill="url(#cpB)"/>
<circle cx="476.3" cy="65.6" r="0.72" fill="#252423"/><circle cx="478.5" cy="65.6" r="0.72" fill="#252423"/><circle cx="480.7" cy="65.6" r="0.72" fill="#252423"/><circle cx="476.3" cy="68.4" r="0.72" fill="#252423"/><circle cx="478.5" cy="68.4" r="0.72" fill="#252423"/><circle cx="480.7" cy="68.4" r="0.72" fill="#252423"/><circle cx="476.3" cy="71.2" r="0.72" fill="#252423"/><circle cx="478.5" cy="71.2" r="0.72" fill="#252423"/><circle cx="480.7" cy="71.2" r="0.72" fill="#252423"/><circle cx="499.3" cy="65.6" r="0.72" fill="#252423"/><circle cx="501.8" cy="65.6" r="0.72" fill="#252423"/><circle cx="504.4" cy="65.6" r="0.72" fill="#252423"/><circle cx="499.3" cy="68.4" r="0.72" fill="#252423"/><circle cx="501.8" cy="68.4" r="0.72" fill="#252423"/><circle cx="504.4" cy="68.4" r="0.72" fill="#252423"/><circle cx="499.3" cy="71.2" r="0.72" fill="#252423"/><circle cx="501.8" cy="71.2" r="0.72" fill="#252423"/><circle cx="504.4" cy="71.2" r="0.72" fill="#252423"/><g>
<path d="M57.3 106.5 V112.8 H63.9" stroke="#252423" stroke-width="0.9" fill="none"/>
<rect x="58.4" y="108.6" width="1.4" height="3.8" fill="#3b3a39"/>
<rect x="60.3" y="110" width="1.3" height="2.4" fill="#3b3a39"/>
<rect x="62" y="107.6" width="1.5" height="4.8" fill="#3b3a39"/>
<g fill="none" stroke="#8a8886" stroke-width="0.7">
<rect x="56.6" y="125.3" width="8" height="6.4"/>
<path d="M56.6 127 H64.6 M56.6 129.2 H64.6 M59.3 125.3 V131.7 M62 125.3 V131.7"/>
</g>
<g fill="none" stroke="#6b6a69" stroke-width="0.7">
<rect x="56.3" y="146.3" width="3.6" height="3.4"/>
<rect x="60.8" y="143.7" width="3.8" height="2.6"/>
<rect x="60.8" y="146.7" width="3.8" height="2.6"/>
<rect x="60.8" y="149.7" width="3.8" height="2.6"/>
<path d="M59.9 148 H60.8"/>
</g>
<g fill="none" stroke="#8a8886" stroke-width="0.7">
<path d="M57 169 V164.4 Q57 163.2 58.2 163.2 H60.4 L63.4 166.2 V169"/>
<path d="M60.4 163.2 V165 Q60.4 166.2 61.6 166.2 H63.4"/>
</g>
<g fill="none" stroke="#8a8886" stroke-width="0.7">
<path d="M57.6 188 V183.4 Q57.6 182.2 58.8 182.2 H61 L64 185.2 V188"/>
<path d="M61 182.2 V184 Q61 185.2 62.2 185.2 H64"/>
</g>
</g><text x="55.34" y="171.40" font-size="3.05" textLength="8.51" lengthAdjust="spacingAndGlyphs" fill="#8a8886" font-weight="bold" >DAX</text><text x="56.37" y="190.40" font-size="3.05" textLength="8.33" lengthAdjust="spacingAndGlyphs" fill="#8a8886" font-weight="bold" >TMDL</text><path d="M650.8000000000001 106.1 L648.5 109.0 L650.8000000000001 111.9 M653.4 106.1 L651.1 109.0 L653.4 111.9" stroke="#252423" stroke-width="0.75" fill="none"/><path d="M667.1 106.1 L664.8 109.0 L667.1 111.9 M669.6999999999999 106.1 L667.4 109.0 L669.6999999999999 111.9" stroke="#252423" stroke-width="0.75" fill="none"/><path d="M683.4000000000001 106.1 L681.1 109.0 L683.4000000000001 111.9 M686.0 106.1 L683.7 109.0 L686.0 111.9" stroke="#252423" stroke-width="0.75" fill="none"/><path d="M700.2 106.1 L697.9 109.0 L700.2 111.9 M702.8 106.1 L700.5 109.0 L702.8 111.9" stroke="#252423" stroke-width="0.75" fill="none"/><text transform="translate(648.49 0) rotate(90)" x="128.16" y="0" font-size="7.0" textLength="21.74" lengthAdjust="spacingAndGlyphs" fill="#252423" stroke="#252423" stroke-width="0.12">Filters</text><path d="M648.6 120.2 H653.2 L651.6 122.6 V124.6 H650.2 V122.6 Z" stroke="#252423" stroke-width="0.6" fill="none" transform="rotate(90 650.9 122.4)"/><text transform="translate(663.39 0) rotate(90)" x="118.55" y="0" font-size="7.0" textLength="52.20" lengthAdjust="spacingAndGlyphs" fill="#252423" stroke="#252423" stroke-width="0.12">Quick measure</text><text transform="translate(679.99 0) rotate(90)" x="118.86" y="0" font-size="7.0" textLength="47.02" lengthAdjust="spacingAndGlyphs" fill="#252423" stroke="#252423" stroke-width="0.12">Visualizations</text><text transform="translate(696.79 0) rotate(90)" x="118.27" y="0" font-size="7.0" textLength="16.65" lengthAdjust="spacingAndGlyphs" fill="#252423" stroke="#252423" stroke-width="0.12">Data</text>
<rect x="76.2" y="426.1" width="8.8" height="5.4" rx="0.5" fill="none" stroke="#3b3a39" stroke-width="0.7"/>
<path d="M80.6 431.7 V433.2 M78.6 433.4 H82.6" stroke="#3b3a39" stroke-width="0.7"/>
<rect x="75" y="435.5" width="11.1" height="1.3" rx="0.65" fill="#0f715f"/>
<rect x="99" y="424.9" width="5.6" height="8.4" rx="0.8" fill="none" stroke="#605e5c" stroke-width="0.8"/>
<path d="M101.2 432 H102.4" stroke="#605e5c" stroke-width="0.5"/>
<path d="M117 429.4 L115.8 430.7 L117 432 M125.7 429.4 L126.9 430.7 L125.7 432" stroke="#c8c6c4" stroke-width="0.6" fill="none"/>
<rect x="131.3" y="422" width="36.7" height="16.5" fill="#ffffff"/>
<rect x="131" y="422" width="0.6" height="17" fill="#e1dfdd"/>
<rect x="131.3" y="437" width="36.7" height="1.6" fill="#0f715f"/>
<rect x="168" y="422.2" width="18.9" height="16.4" fill="#0f715f"/>
<path d="M177.4 427.2 V433.4 M174.3 430.3 H180.5" stroke="#ffffff" stroke-width="1.4"/>
<text x="140.66" y="433.40" font-size="6.83" textLength="17.28" lengthAdjust="spacingAndGlyphs" fill="#252423" stroke="#252423" stroke-width="0.25">Page 1</text><text x="52.36" y="447.90" font-size="6.98" textLength="28.40" lengthAdjust="spacingAndGlyphs" fill="#55534f" >Page 1 of 1</text>
<rect x="607.3" y="445" width="1.6" height="0.7" fill="#605e5c"/>
<rect x="611.3" y="444.8" width="48" height="1.2" fill="#b3b0ad"/>
<rect x="632.1" y="442.5" width="1.9" height="5.8" rx="0.5" fill="#3b3a39"/>
<rect x="635.2" y="444.6" width="0.6" height="1.6" fill="#605e5c"/>
<path d="M662.5 445.4 H665 M663.75 444.1 V446.7" stroke="#605e5c" stroke-width="0.6"/>
<rect x="692.2" y="442.8" width="7.4" height="5.2" fill="none" stroke="#605e5c" stroke-width="0.8"/>
<ellipse cx="695.9" cy="445.4" rx="2.2" ry="1.5" fill="#fff" stroke="none"/>
<text x="671.64" y="447.60" font-size="6.59" textLength="11.78" lengthAdjust="spacingAndGlyphs" fill="#605e5c" >90%</text>
</svg></body></html>
